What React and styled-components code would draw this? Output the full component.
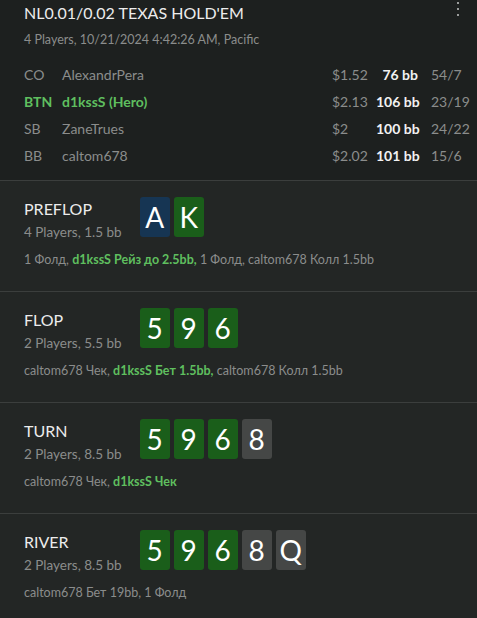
import React from "react";
import styled, { createGlobalStyle } from "styled-components";

const GlobalStyle = createGlobalStyle`
  html, body {
    margin: 0;
    padding: 0;
    background: #232625;
  }
  body {
    font-family: Lato, "Noto Sans", sans-serif;
    color: #e6e6e6;
  }
`;

const players = [
  { pos: "CO", name: "AlexandrPera", stack: "$1.52", bb: "76 bb", stats: "54/7" },
  { pos: "BTN", name: "d1kssS (Hero)", stack: "$2.13", bb: "106 bb", stats: "23/19", hero: true },
  { pos: "SB", name: "ZaneTrues", stack: "$2", bb: "100 bb", stats: "24/22" },
  { pos: "BB", name: "caltom678", stack: "$2.02", bb: "101 bb", stats: "15/6" },
];

const streets = [
  {
    name: "PREFLOP",
    info: "4 Players, 1.5 bb",
    cards: [{ r: "A", c: "blue" }, { r: "K", c: "green" }],
    actions: [
      { t: "1 Фолд, " },
      { t: "d1kssS Рейз до 2.5bb,", hero: true },
      { t: " 1 Фолд, caltom678 Колл 1.5bb" },
    ],
  },
  {
    name: "FLOP",
    info: "2 Players, 5.5 bb",
    cards: [{ r: "5", c: "green" }, { r: "9", c: "green" }, { r: "6", c: "green" }],
    actions: [
      { t: "caltom678 Чек, " },
      { t: "d1kssS Бет 1.5bb,", hero: true },
      { t: " caltom678 Колл 1.5bb" },
    ],
  },
  {
    name: "TURN",
    info: "2 Players, 8.5 bb",
    cards: [{ r: "5", c: "green" }, { r: "9", c: "green" }, { r: "6", c: "green" }, { r: "8", c: "gray" }],
    actions: [{ t: "caltom678 Чек, " }, { t: "d1kssS Чек", hero: true }],
  },
  {
    name: "RIVER",
    info: "2 Players, 8.5 bb",
    cards: [
      { r: "5", c: "green" },
      { r: "9", c: "green" },
      { r: "6", c: "green" },
      { r: "8", c: "gray" },
      { r: "Q", c: "gray" },
    ],
    actions: [{ t: "caltom678 Бет 19bb, 1 Фолд" }],
  },
];

const cardColors = {
  blue: "#163553",
  green: "#1a5e1a",
  gray: "#454746",
};

function App() {
  return (
    <>
      <GlobalStyle />
      <Page>
        <Header>
          <TitleRow>
            <Title>NL0.01/0.02 TEXAS HOLD'EM</Title>
            <MenuButton aria-label="menu">
              <svg width="4" height="16" viewBox="0 0 4 16">
                <rect x="1" y="2" width="2" height="2" fill="#9a9c9b" />
                <rect x="1" y="8" width="2" height="2" fill="#9a9c9b" />
                <rect x="1" y="14" width="2" height="2" fill="#9a9c9b" />
              </svg>
            </MenuButton>
          </TitleRow>
          <Subtitle>4 Players, 10/21/2024 4:42:26 AM, Pacific</Subtitle>
          <PlayerTable>
            {players.map((p) => (
              <PlayerRow key={p.pos}>
                <Pos hero={p.hero}>{p.pos}</Pos>
                <Name hero={p.hero}>{p.name}</Name>
                <Stack>{p.stack}</Stack>
                <BB>{p.bb}</BB>
                <Stats>{p.stats}</Stats>
              </PlayerRow>
            ))}
          </PlayerTable>
        </Header>
        {streets.map((s) => (
          <Street key={s.name}>
            <StreetTop>
              <StreetInfo>
                <StreetName>{s.name}</StreetName>
                <StreetSub>{s.info}</StreetSub>
              </StreetInfo>
              <Cards>
                {s.cards.map((c, i) => (
                  <Card key={i} color={cardColors[c.c]}>
                    {c.r}
                  </Card>
                ))}
              </Cards>
            </StreetTop>
            <Actions>
              {s.actions.map((a, i) =>
                a.hero ? <HeroText key={i}>{a.t}</HeroText> : <span key={i}>{a.t}</span>
              )}
            </Actions>
          </Street>
        ))}
      </Page>
    </>
  );
}

const Page = styled.div`
  width: 477px;
  min-height: 618px;
  background: #232625;
`;

const Header = styled.div`
  background: #1d201f;
  padding: 0 12px 11px 24px;
  border-bottom: 1px solid #3b3e3d;
`;

const TitleRow = styled.div`
  display: flex;
  justify-content: space-between;
  align-items: flex-start;
`;

const Title = styled.div`
  font-size: 16px;
  line-height: 26px;
  color: #ececec;
`;

const MenuButton = styled.div`
  margin-right: 5px;
  line-height: 0;
`;

const Subtitle = styled.div`
  font-size: 12.5px;
  line-height: 18px;
  margin-top: 5px;
  color: #8b8d8c;
`;

const PlayerTable = styled.div`
  margin-top: 12px;
  display: flex;
  flex-direction: column;
`;

const PlayerRow = styled.div`
  display: grid;
  grid-template-columns: 38px 1fr 44px 42px 47px;
  height: 27px;
  align-items: center;
  font-size: 14px;
  white-space: nowrap;
`;

const Pos = styled.span`
  color: ${(p) => (p.hero ? "#5fbf5f" : "#8b8d8c")};
  font-weight: ${(p) => (p.hero ? 700 : 400)};
`;

const Name = styled.span`
  color: ${(p) => (p.hero ? "#5fbf5f" : "#8b8d8c")};
  font-weight: ${(p) => (p.hero ? 700 : 400)};
`;

const Stack = styled.span`
  color: #8b8d8c;
`;

const BB = styled.span`
  color: #f2f2f2;
  font-weight: 700;
  text-align: right;
`;

const Stats = styled.span`
  color: #8b8d8c;
  padding-left: 13px;
`;

const Street = styled.div`
  padding: 16px 24px 0 24px;
  height: 111px;
  box-sizing: border-box;
  border-bottom: 1px solid #3b3e3d;
`;

const StreetTop = styled.div`
  display: flex;
  align-items: flex-start;
  gap: 18px;
`;

const StreetInfo = styled.div`
  padding-top: 2px;
`;

const StreetName = styled.div`
  font-size: 16px;
  line-height: 20px;
  color: #ececec;
`;

const StreetSub = styled.div`
  font-size: 13.5px;
  line-height: 16px;
  margin-top: 5px;
  color: #8b8d8c;
`;

const Cards = styled.div`
  display: flex;
  gap: 4px;
`;

const Card = styled.div`
  width: 30px;
  height: 40px;
  border-radius: 3px;
  background: ${(p) => p.color};
  color: #ffffff;
  font-size: 28px;
  display: flex;
  align-items: center;
  justify-content: center;
`;

const Actions = styled.div`
  margin-top: 12px;
  font-size: 12.5px;
  line-height: 16px;
  color: #8b8d8c;
`;

const HeroText = styled.span`
  color: #5fbf5f;
  font-weight: 700;
`;

export default App;
